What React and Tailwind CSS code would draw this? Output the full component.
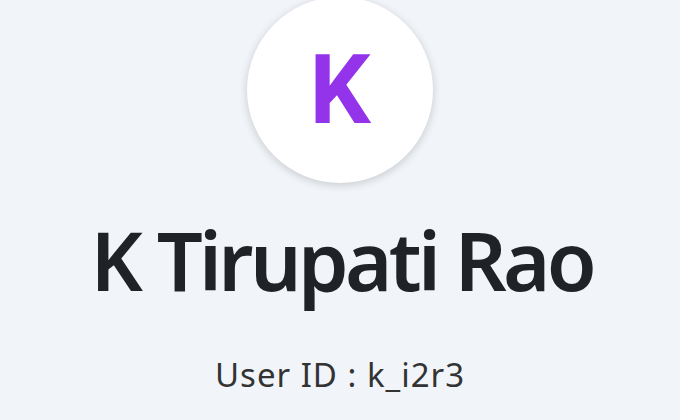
export default function App() {
  return (
    <div className="w-[680px] h-[420px] overflow-hidden bg-slate-100 flex flex-col items-center font-['Noto_Sans',sans-serif]">
      {/* Avatar */}
      <div className="-mt-[3px] w-[186px] h-[186px] shrink-0 rounded-full bg-white shadow-[0_2px_8px_rgba(0,0,0,0.18)] flex items-center justify-center">
        <span className="font-['Roboto',sans-serif] font-bold text-[96px] leading-none text-[#9333ea]">
          K
        </span>
      </div>

      {/* Name */}
      <h1 className="mt-[28px] pl-[0.045em] text-[81px] leading-[1.2] font-semibold tracking-[-0.045em] text-[#1f2328]">
        K Tirupati Rao
      </h1>

      {/* User id */}
      <p className="mt-[50px] text-[33px] leading-none tracking-[0.03em] text-[#333]">
        User ID : k_i2r3
      </p>
    </div>
  );
}
